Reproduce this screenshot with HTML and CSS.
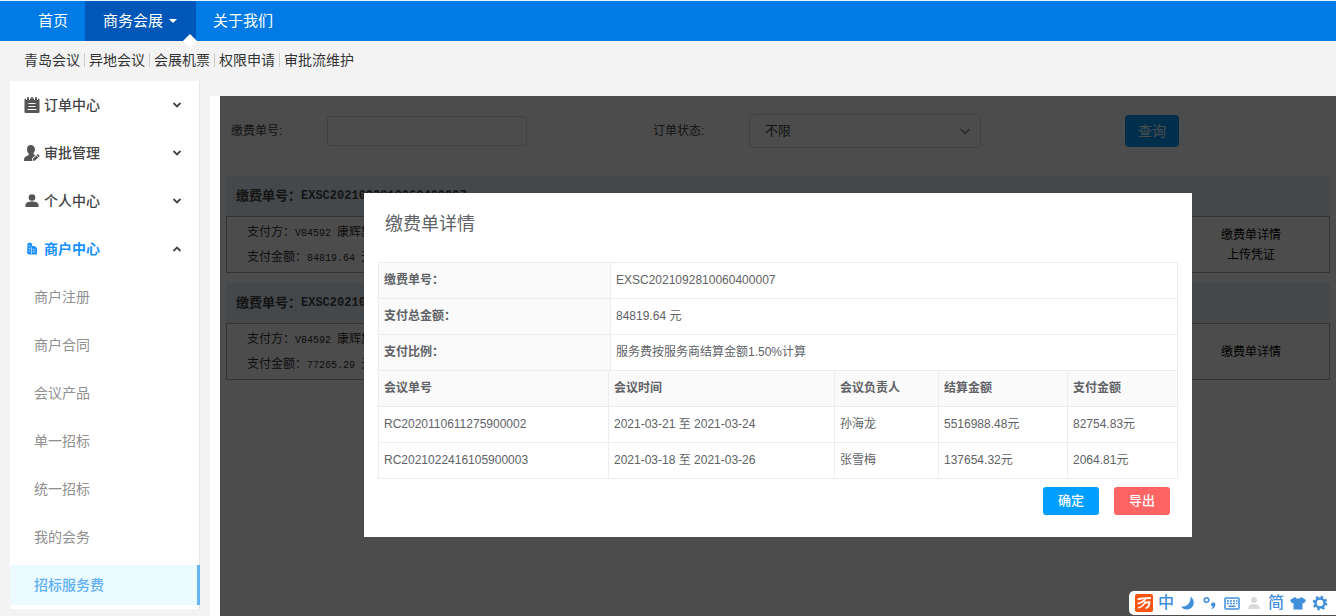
FILE: index.html
```html
<!DOCTYPE html>
<html lang="zh-CN">
<head>
<meta charset="utf-8">
<title>招标服务费</title>
<link rel="stylesheet" href="styles.css">
</head>
<body>
<nav class="topnav">
  <a class="topnav-item" href="#">首页</a>
  <a class="topnav-item topnav-active" href="#">商务会展<span class="caret"></span></a>
  <a class="topnav-item" href="#">关于我们</a>
</nav>
<nav class="subnav">
  <a href="#">青岛会议</a>
  <a href="#">异地会议</a>
  <a href="#">会展机票</a>
  <a href="#">权限申请</a>
  <a href="#">审批流维护</a>
</nav>
<div class="layout">
  <aside class="sidebar">
    <a class="group" href="#">
      <svg class="group-icon" viewBox="0 0 16 16"><path fill="#555" d="M1.500 1.500h13A1.500 1.500 0 0 1 15.500 3v12a1 1 0 0 1-1 1h-13a1 1 0 0 1-1-1V3a1.500 1.500 0 0 1 1-1.500z"/><path stroke="#fff" stroke-width="1" d="M2.500 0v3M5.500 0v3M10.500 0v3M13.500 0v3"/><path stroke="#555" stroke-width="1.500" d="M4 0v3M8 0v3M12 0v3"/><path stroke="#fff" stroke-width="1.200" d="M4.500 6.500h7M4.500 9.500h7M3.500 12.500h9"/></svg>
      <span>订单中心</span>
      <svg class="chev" viewBox="0 0 10 10"><path d="M1.500 3 5 6.500 8.500 3"/></svg>
    </a>
    <a class="group" href="#">
      <svg class="group-icon" viewBox="0 0 16 16"><path fill="#555" d="M6.500 0C9 0 11 1.700 11 4.200c0 2-1 3-1.600 4 .2 1 1.200 1.500 2 1.800L8 13.500V16H0c0-3.500 1-4.500 4-5.500 1-.4 1-1.300.6-2C3.500 7.500 3 6 3 4.200 3 1.500 4.500 0 6.500 0z"/><path fill="#555" d="m9 13.700 4.800-4.800 2 2L11 15.500 8.700 16z"/><path stroke="#fff" stroke-width=".8" d="m12.300 10.200 2 2"/></svg>
      <span>审批管理</span>
      <svg class="chev" viewBox="0 0 10 10"><path d="M1.500 3 5 6.500 8.500 3"/></svg>
    </a>
    <a class="group" href="#">
      <svg class="group-icon" viewBox="0 0 16 16"><circle cx="8" cy="4.500" r="3.300" fill="#555"/><path fill="#555" d="M1.500 14v-2c0-2.500 3-3.500 6.500-3.500s6.500 1 6.500 3.500v2z"/></svg>
      <span>个人中心</span>
      <svg class="chev" viewBox="0 0 10 10"><path d="M1.500 3 5 6.500 8.500 3"/></svg>
    </a>
    <a class="group group-open" href="#">
      <svg class="group-icon" viewBox="0 0 16 16"><path fill="#1890ff" d="M3.500 2.500 5.500 1.500 8 2.500V5h2.500L13 7v6.500H4.500L3 12z"/><path stroke="#bfe0ff" stroke-width=".8" fill="none" d="M4.500 5h2M4.500 7.500h2M4.500 10h2M8.500 8.300h3M8.500 10.800h3M7.500 6v7"/></svg>
      <span>商户中心</span>
      <svg class="chev" viewBox="0 0 10 10"><path d="M1.500 7 5 3.500 8.500 7"/></svg>
    </a>
    <a class="leaf" href="#">商户注册</a>
    <a class="leaf" href="#">商户合同</a>
    <a class="leaf" href="#">会议产品</a>
    <a class="leaf" href="#">单一招标</a>
    <a class="leaf" href="#">统一招标</a>
    <a class="leaf" href="#">我的会务</a>
    <a class="leaf leaf-active" href="#">招标服务费</a>
  </aside>
  <main class="main">
    <div class="panel">
      <form class="filters">
        <div class="field"><label for="order-no">缴费单号:</label><input id="order-no" type="text"></div>
        <div class="field">
          <label for="status">订单状态:</label>
          <div class="select-wrap">
            <select id="status"><option>不限</option></select>
            <svg class="select-arrow" viewBox="0 0 12 12"><path d="M1.500 4 6 8.500 10.500 4"/></svg>
          </div>
        </div>
        <button class="search" type="button">查询</button>
      </form>
      <section class="order">
        <h2 class="order-head">缴费单号：<span class="order-no">EXSC2021092810060400007</span></h2>
        <div class="order-body">
          <div class="order-info">
            <p>支付方：<span class="mono">V84592 </span>康辉集团</p>
            <p>支付金额：<span class="mono">84819.64 </span>元</p>
          </div>
          <div class="order-links"><a href="#">缴费单详情</a><a href="#">上传凭证</a></div>
        </div>
      </section>
      <section class="order">
        <h2 class="order-head">缴费单号：<span class="order-no">EXSC20210</span></h2>
        <div class="order-body">
          <div class="order-info">
            <p>支付方：<span class="mono">V84592 </span>康辉集团</p>
            <p>支付金额：<span class="mono">77265.29 </span>元</p>
          </div>
          <div class="order-links"><a href="#">缴费单详情</a></div>
        </div>
      </section>
      <div class="overlay">
        <div class="modal" role="dialog" aria-labelledby="modal-title">
          <h1 class="modal-title" id="modal-title">缴费单详情</h1>
          <table class="summary">
            <tr><th scope="row">缴费单号：</th><td>EXSC2021092810060400007</td></tr>
            <tr><th scope="row">支付总金额：</th><td>84819.64 元</td></tr>
            <tr><th scope="row">支付比例：</th><td>服务费按服务商结算金额1.50%计算</td></tr>
          </table>
          <table class="meetings">
            <colgroup><col class="c-id"><col class="c-time"><col class="c-owner"><col class="c-settle"><col></colgroup>
            <thead><tr><th>会议单号</th><th>会议时间</th><th>会议负责人</th><th>结算金额</th><th>支付金额</th></tr></thead>
            <tbody>
              <tr><td>RC2020110611275900002</td><td>2021-03-21 至 2021-03-24</td><td>孙海龙</td><td>5516988.48元</td><td>82754.83元</td></tr>
              <tr><td>RC2021022416105900003</td><td>2021-03-18 至 2021-03-26</td><td>张雪梅</td><td>137654.32元</td><td>2064.81元</td></tr>
            </tbody>
          </table>
          <div class="modal-actions">
            <button class="btn btn-ok" type="button">确定</button>
            <button class="btn btn-export" type="button">导出</button>
          </div>
        </div>
      </div>
    </div>
  </main>
</div>
<div class="ime">
  <svg viewBox="0 0 18 18"><rect width="18" height="18" rx="2" fill="#fb5410"/><path fill="none" stroke="#fff" stroke-width="1.800" d="M2.500 5.500C7 4 11 4 16 4M2.500 9.500c4-.5 6-2 8-4.500M3 14c4-1 6-3 7.500-6.500M9 9l5.500-1c0 3-1 5.500-4 6.500"/></svg>
  <span>中</span>
  <svg viewBox="0 0 18 18"><path fill="#3f8fdc" d="M11.500 2.500c5 3 4.500 12-3 13-2.500.3-5-.8-6.500-3 6 .8 10-3.500 9.500-10z"/></svg>
  <svg viewBox="0 0 18 18"><circle cx="5.500" cy="6" r="2.300" fill="none" stroke="#3f8fdc" stroke-width="1.500"/><path fill="#3f8fdc" d="M10 10.500a2.200 2.200 0 1 1 4.300.8c-.3 2-1.800 3.200-3.300 3.700l-.5-1c1-.5 1.500-1 1.500-1.500-1.200 0-2-.8-2-2z"/></svg>
  <svg viewBox="0 0 18 18"><rect x="2" y="4" width="14" height="11" rx="1" fill="none" stroke="#3f8fdc" stroke-width="1.500"/><path stroke="#3f8fdc" stroke-width="1.500" stroke-dasharray="2 1" d="M4 7h10.500M4 9.500h10.500"/><path stroke="#3f8fdc" stroke-width="1.500" d="M5.500 12.300h7"/></svg>
  <svg viewBox="0 0 18 18"><circle cx="9" cy="6" r="3" fill="#d6d8da"/><path fill="#d6d8da" d="M3.500 15v-1.500c0-2 2-3.500 5.500-3.500s5.500 1.500 5.500 3.500V15z"/></svg>
  <span>简</span>
  <svg viewBox="0 0 18 18"><path fill="#3f8fdc" d="m6 3 1.500 1.500h3L12 3l5 3-2 3.500-1.500-.8V15.500h-9V8.700L3 9.500 1 6z"/></svg>
  <svg viewBox="0 0 18 18"><circle cx="9" cy="9" r="4.500" fill="none" stroke="#3f8fdc" stroke-width="2.500"/><circle cx="9" cy="9" r="6.300" fill="none" stroke="#3f8fdc" stroke-width="2" stroke-dasharray="2.470 2.470"/></svg>
</div>
</body>
</html>
```
FILE: styles.css
```css
* {
  box-sizing: border-box;
}

body {
  margin: 0;
  min-height: 100vh;
  display: flex;
  flex-direction: column;
  background: #f3f3f3;
  color: #333;
  font: 12px/20px "Liberation Sans", "Noto Sans CJK SC", sans-serif;
}

a {
  color: inherit;
  text-decoration: none;
}

input, select, button {
  font: inherit;
  color: inherit;
}

.topnav {
  display: flex;
  padding-left: 21px;
  border-top: 1px solid #e4f6ff;
  background: #007be6;
  color: #fff;
  font-size: 15px;
  line-height: 40px;
}

.topnav-item {
  padding: 0 17px;
}

.topnav-active {
  position: relative;
  display: flex;
  align-items: center;
  gap: 6px;
  padding: 0 19px 0 18px;
  background: #0057b8;
}

.topnav-active::after {
  content: "";
  position: absolute;
  right: 1px;
  bottom: -5px;
  width: 10px;
  height: 10px;
  background: #fff;
  transform: rotate(45deg);
}

.caret {
  border: 4px solid transparent;
  border-top-color: #fff;
  border-bottom: 0;
}

.subnav {
  display: flex;
  align-items: center;
  height: 40px;
  padding: 0 0 2px 24px;
  font-size: 14px;
  line-height: 14px;
}

.subnav a + a {
  margin-left: 4px;
  padding-left: 4px;
  border-left: 1px solid #ccc;
}

.layout {
  flex: 1;
  display: flex;
  align-items: flex-start;
  gap: 10px;
  padding-left: 10px;
}

.sidebar {
  flex: none;
  width: 190px;
  display: flex;
  flex-direction: column;
  gap: 8px;
  padding: 4px 0;
  background: #fff;
  border-right: 1px solid #e6e6e6;
  font-size: 14px;
  line-height: 40px;
}

.group {
  display: flex;
  align-items: center;
  gap: 4px;
  padding: 0 17px 0 14px;
  color: #444;
  font-weight: 500;
}

.group-open {
  color: #1890ff;
  font-weight: 700;
}

.group-icon {
  width: 16px;
  height: 16px;
}

.chev {
  width: 10px;
  height: 10px;
  margin-left: auto;
  fill: none;
  stroke: #444;
  stroke-width: 1.8;
}

.leaf {
  padding-left: 24px;
  color: #909090;
}

.leaf-active {
  margin-right: -1px;
  border-right: 3px solid #66b5f2;
  background: #ebfaff;
  color: #5fb0f5;
  font-weight: 500;
}

.main {
  flex: 1;
  align-self: stretch;
  display: flex;
  margin-top: 15px;
  padding-left: 10px;
  background: #fff;
}

.panel {
  position: relative;
  flex: 1;
  padding: 18px 6px 0;
}

.filters {
  display: grid;
  grid-template-columns: 422fr 472fr 205fr;
  align-items: center;
  justify-items: start;
  padding-left: 5px;
  margin-bottom: 28px;
  color: #444;
}

.field {
  display: flex;
  align-items: center;
}

.field label {
  width: 96px;
}

.field input {
  width: 200px;
  height: 30px;
  border: 1px solid #dcdcdc;
  border-radius: 2px;
  background: #fff;
}

.select-wrap {
  position: relative;
}

.select-wrap select {
  width: 232px;
  height: 34px;
  padding: 0 15px;
  border: 1px solid #dcdcdc;
  border-radius: 4px;
  background: #fff;
  font-size: 13px;
  appearance: none;
}

.select-arrow {
  position: absolute;
  right: 10px;
  top: 11px;
  width: 12px;
  height: 12px;
  fill: none;
  stroke: #888;
  stroke-width: 1.5;
}

.search {
  width: 54px;
  height: 32px;
  padding: 0;
  border: 0;
  border-radius: 4px;
  background: #009fff;
  color: #fff;
  font-size: 14px;
}

.order {
  margin-bottom: 10px;
}

.order-head {
  display: flex;
  align-items: center;
  height: 40px;
  margin: 0;
  padding-left: 10px;
  background: #e6f0fa;
  color: #444;
  font-size: 13px;
}

.order-no {
  font-family: "Liberation Mono", monospace;
  font-size: 12px;
}

.order-body {
  display: flex;
  align-items: center;
  justify-content: space-between;
  min-height: 57px;
  border: 1px solid #aaa;
}

.order-info {
  padding-left: 20px;
  line-height: 25px;
}

.order-info p {
  height: 25px;
  margin: 0;
}

.mono {
  font-family: "Liberation Mono", monospace;
  font-size: 10px;
  line-height: 10px;
  white-space: pre;
}

.order-links {
  width: 156px;
  display: flex;
  flex-direction: column;
  align-items: center;
  color: #000;
}

.overlay {
  position: absolute;
  inset: 0;
  display: flex;
  justify-content: center;
  align-items: flex-start;
  padding-top: 97px;
  background: rgba(0, 0, 0, 0.7);
}

.modal {
  width: 828px;
  max-width: 100%;
  padding: 16px 14px 22px;
  background: #fff;
  color: #606266;
}

.modal-title {
  margin: 0 0 23px;
  padding-left: 7px;
  font-size: 18px;
  font-weight: 400;
  line-height: 30px;
}

.summary,
.meetings {
  width: 100%;
  table-layout: fixed;
  border-spacing: 0;
  border-left: 1px solid #ebeef0;
}

.summary {
  border-top: 1px solid #ebeef0;
}

.modal th,
.modal td {
  height: 36px;
  padding: 0 5px 2px;
  border-right: 1px solid #ebeef0;
  border-bottom: 1px solid #ebeef0;
  text-align: left;
}

.modal th {
  background: #fafafa;
}

.summary th {
  width: 232px;
}

.c-id {
  width: 230px;
}

.c-time {
  width: 226px;
}

.c-owner {
  width: 104px;
}

.c-settle {
  width: 129px;
}

.modal-actions {
  display: flex;
  justify-content: flex-end;
  gap: 15px;
  padding: 8px 8px 0 0;
}

.btn {
  width: 56px;
  height: 28px;
  padding: 0;
  border: 0;
  border-radius: 3px;
  color: #fff;
  font-size: 13px;
  font-weight: 500;
}

.btn-ok {
  background: #009fff;
}

.btn-export {
  background: #ff6464;
}

.ime {
  position: fixed;
  right: 0;
  bottom: 1px;
  display: flex;
  align-items: center;
  gap: 4px;
  height: 24px;
  padding: 0 7px 0 6px;
  border-radius: 5px 0 0 5px;
  background: #fff;
  color: #3f8fdc;
  font-size: 16px;
  font-weight: 500;
}

.ime svg,
.ime span {
  width: 18px;
  height: 18px;
  line-height: 18px;
  text-align: center;
}
```
